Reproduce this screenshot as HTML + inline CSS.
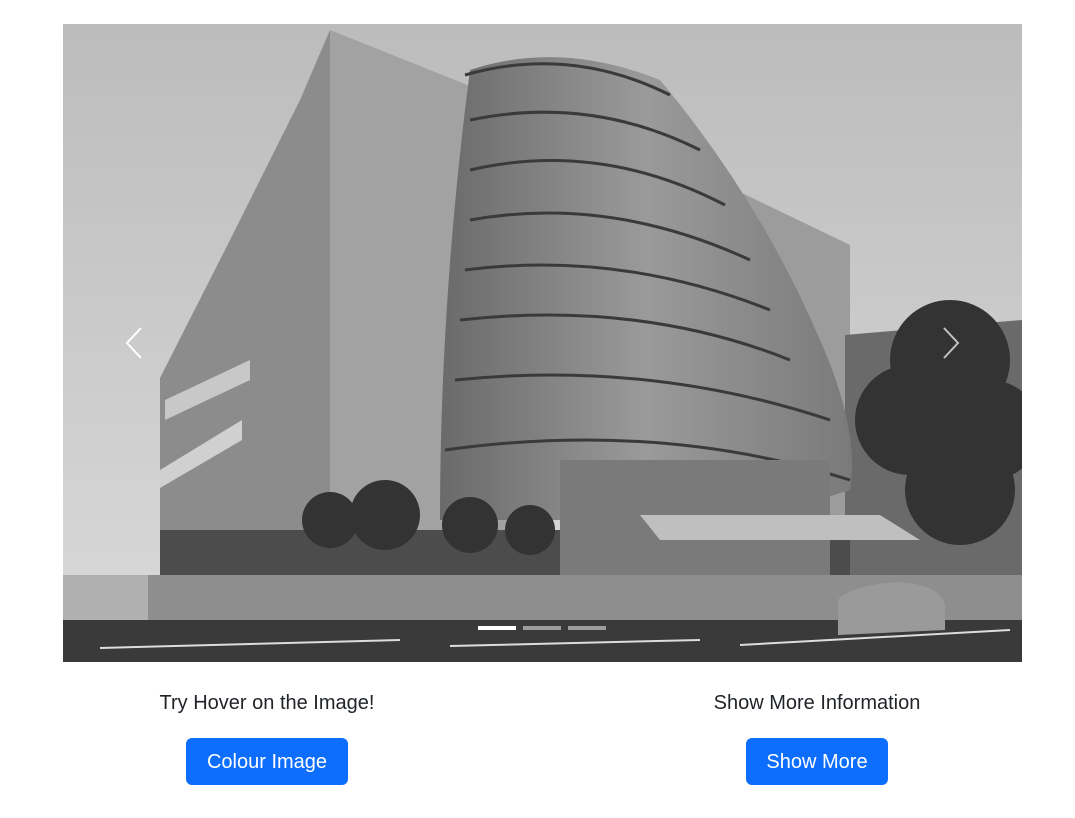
<!DOCTYPE html>
<html><head><meta charset="utf-8"><style>
body{margin:0;background:#fff;width:1075px;height:818px;overflow:hidden;font-family:"Liberation Sans",sans-serif;}
.img{position:absolute;left:63px;top:24px;width:959px;height:638px;overflow:hidden}
.txt{position:absolute;top:692px;font-size:20px;color:#212529;text-align:center;width:400px}
.btn{position:absolute;top:738px;height:47px;background:#0d6efd;color:#fff;border-radius:6px;font-size:20px;line-height:48px;text-align:center}
</style></head><body>
<div class="img">
<svg width="959" height="638" viewBox="63 24 959 638" xmlns="http://www.w3.org/2000/svg">
<defs><linearGradient id="sky" x1="0" y1="0" x2="0" y2="1"><stop offset="0" stop-color="#bcbcbc"/><stop offset="1" stop-color="#dadada"/></linearGradient>
<linearGradient id="glass" x1="0" y1="0" x2="1" y2="0"><stop offset="0" stop-color="#6a6a6a"/><stop offset="0.5" stop-color="#9a9a9a"/><stop offset="1" stop-color="#7a7a7a"/></linearGradient></defs>
<rect x="63" y="24" width="959" height="638" fill="url(#sky)"/>
<polygon points="715,180 850,245 850,600 715,600" fill="#9c9c9c"/>
<polygon points="845,335 1022,320 1022,600 845,600" fill="#6a6a6a"/>
<polygon points="160,378 230,240 300,100 330,30 330,585 160,560" fill="#8c8c8c"/>
<polygon points="330,30 550,118 550,585 330,585" fill="#a2a2a2"/>
<polygon points="165,400 250,360 250,380 165,420" fill="#c8c8c8"/>
<polygon points="160,470 242,420 242,440 160,488" fill="#d0d0d0"/>
<path d="M470,70 Q560,40 660,80 Q760,200 820,340 Q860,430 850,490 Q760,520 640,520 L440,520 Q440,300 470,70 Z" fill="url(#glass)"/>
<g stroke="#3a3a3a" stroke-width="3" fill="none">
<path d="M465,75 Q570,45 670,95"/><path d="M470,120 Q590,95 700,150"/><path d="M470,170 Q600,140 725,205"/>
<path d="M470,220 Q610,195 750,260"/><path d="M465,270 Q620,250 770,310"/><path d="M460,320 Q640,300 790,360"/>
<path d="M455,380 Q650,360 830,420"/><path d="M445,450 Q660,420 850,480"/>
</g>
<rect x="160" y="530" width="690" height="70" fill="#4c4c4c"/>
<rect x="560" y="460" width="270" height="120" fill="#7a7a7a"/>
<g fill="#333"><circle cx="330" cy="520" r="28"/><circle cx="385" cy="515" r="35"/><circle cx="470" cy="525" r="28"/><circle cx="530" cy="530" r="25"/>
<circle cx="950" cy="360" r="60"/><circle cx="910" cy="420" r="55"/><circle cx="990" cy="430" r="50"/><circle cx="960" cy="490" r="55"/></g>
<polygon points="640,515 880,515 920,540 660,540" fill="#bfbfbf"/>
<rect x="63" y="575" width="959" height="45" fill="#8e8e8e"/>
<rect x="63" y="575" width="85" height="45" fill="#b0b0b0"/>
<rect x="63" y="620" width="959" height="42" fill="#3a3a3a"/>
<g stroke="#ddd" stroke-width="2"><line x1="100" y1="648" x2="400" y2="640"/><line x1="450" y1="646" x2="700" y2="640"/><line x1="740" y1="645" x2="1010" y2="630"/></g>
<path d="M838,600 Q850,585 900,582 Q940,585 945,605 L945,630 L838,635 Z" fill="#9a9a9a"/>
<rect x="478" y="626" width="38" height="4" fill="#fff"/><rect x="523" y="626" width="38" height="4" fill="#fff" opacity=".5"/><rect x="568" y="626" width="38" height="4" fill="#fff" opacity=".5"/>
<path d="M141,328 L127,343 L141,358" stroke="#fff" stroke-width="2" fill="none"/>
<path d="M944,328 L958,343 L944,358" stroke="#fff" stroke-width="2" fill="none" opacity=".7"/>
</svg>
</div>
<div class="txt" style="left:67px">Try Hover on the Image!</div>
<div class="txt" style="left:617px">Show More Information</div>
<div class="btn" style="left:186px;width:162px">Colour Image</div>
<div class="btn" style="left:746px;width:142px">Show More</div>
</body></html>
